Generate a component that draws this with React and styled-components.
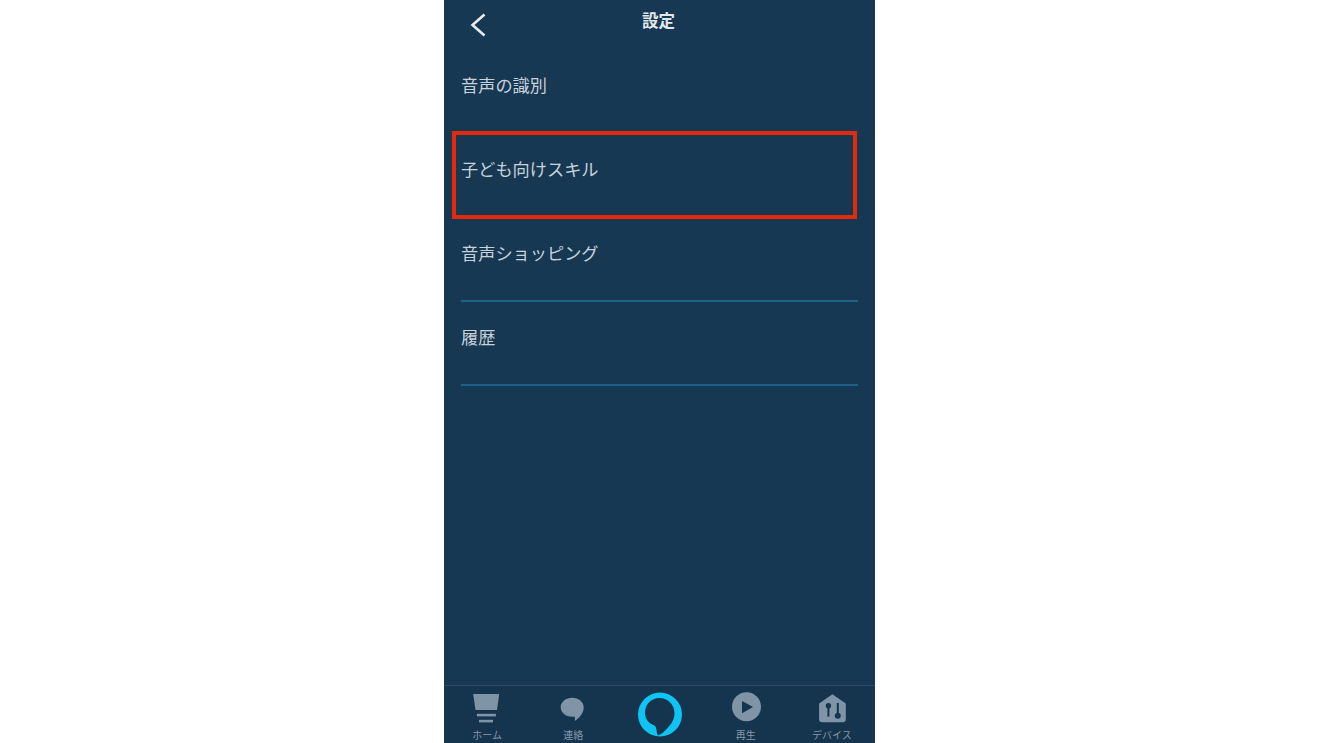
import React from 'react';
import styled, { createGlobalStyle } from 'styled-components';

const GlobalStyle = createGlobalStyle`
  html, body {
    margin: 0;
    padding: 0;
    background: #fff;
  }
`;

const Page = styled.div`
  height: 743px;
  padding-left: 444px;
  overflow: hidden;
  font-family: "Noto Sans CJK JP", "Noto Sans", sans-serif;
`;

const Phone = styled.div`
  display: flex;
  flex-direction: column;
  width: 431px;
  height: 743px;
  overflow: hidden;
  background-color: #163853;
`;

const Header = styled.header`
  position: relative;
  display: flex;
  justify-content: center;
  flex: none;
  height: 50px;
  padding: 8px 2px 0 0;
  box-sizing: border-box;
`;

const BackButton = styled.button`
  position: absolute;
  left: 24px;
  top: 12px;
  width: 20px;
  height: 26px;
  padding: 0;
  border: 0;
  background: none;
`;

const Title = styled.h1`
  margin: 0;
  font-size: 16.5px;
  font-weight: 700;
  line-height: 24px;
  color: #e3e8ec;
`;

const List = styled.div`
  flex: 1;
`;

const Row = styled.div`
  position: relative;
  height: 84px;
  margin: 0 17px;
  padding-top: 22px;
  box-sizing: border-box;
  font-size: 17.2px;
  line-height: 26px;
  color: #c8d2da;
  border-bottom: ${props => (props.$divider ? '2px solid #1d6288' : '2px solid transparent')};
`;

const Highlight = styled.div`
  position: absolute;
  left: -9px;
  top: -3px;
  width: 405px;
  height: 88px;
  box-sizing: border-box;
  border: 4px solid #e5290b;
`;

const Nav = styled.nav`
  display: grid;
  grid-template-columns: repeat(5, 1fr);
  flex: none;
  height: 58px;
  box-sizing: border-box;
  padding-top: 6px;
  border-top: 1px solid #2b4d69;
  background-color: #15344d;
`;

const NavItem = styled.div`
  display: flex;
  flex-direction: column;
  align-items: center;
  font-size: 10px;
  line-height: 14px;
  color: #8598aa;

  svg {
    display: block;
    flex: none;
    margin-bottom: 4px;
  }
`;

const AlexaItem = styled(NavItem)`
  padding-left: 1px;
`;

const HomeIcon = () => (
  <svg width="32" height="32" viewBox="0 0 32 32" fill="#8094a8">
    <path d="M2.200 2h26l-2.200 16H4.500z" />
    <rect x="5.900" y="21.800" width="19" height="2.600" />
    <rect x="8" y="27.800" width="14" height="2.600" />
  </svg>
);

const ChatIcon = () => (
  <svg width="32" height="32" viewBox="0 0 32 32" fill="#8094a8">
    <path d="M15.200 5.700c6.400 0 11.500 4.200 11.500 9.500 0 5.800-3.800 10.600-9 13.800.5-1.500.3-3.100-.3-4.500-.7.100-1.400.2-2.200.2-6.400 0-11.500-4.200-11.500-9.500s5.100-9.500 11.500-9.500z" />
  </svg>
);

const PlayIcon = () => (
  <svg width="32" height="32" viewBox="0 0 32 32">
    <circle cx="16.500" cy="14.700" r="14.500" fill="#8094a8" />
    <path d="M12 9l11 6.100L12 21.300z" fill="#15344d" />
  </svg>
);

const DeviceIcon = () => (
  <svg width="32" height="32" viewBox="0 0 32 32">
    <path
      d="M16.400 2.300L29.800 11.500V27.300a3 3 0 0 1-3 3H6.100a3 3 0 0 1-3-3V11.500z"
      fill="#8094a8"
    />
    <circle cx="12.400" cy="13.700" r="2.700" fill="#15344d" />
    <rect x="11.400" y="14" width="2" height="10.700" fill="#15344d" />
    <rect x="20.800" y="11" width="2" height="11" fill="#15344d" />
    <circle cx="21.800" cy="23.700" r="3" fill="#15344d" />
  </svg>
);

const AlexaIcon = () => (
  <svg width="44" height="45" viewBox="0 0 44 45">
    <path
      fillRule="evenodd"
      d="M22 .5a22 22 0 1 1 0 44 22 22 0 0 1 0-44zM20 43.500C24 42 27 39 30 35.500C33.500 32 36.500 27 36.500 21.500C36.500 12.500 30 6 21.500 6C13 6 7 12.500 7 21C7 27 11 31.500 16 33.300Q18 34 18.300 37Q18.600 41 20 43.500z"
      fill="#0fc4f2"
    />
  </svg>
);

const App = () => (
  <Page>
    <GlobalStyle />
    <Phone>
      <Header>
        <BackButton aria-label="戻る">
          <svg width="20" height="26" viewBox="0 0 20 26" fill="none">
            <path d="M16.500 2.500L4.500 13l12 10.500" stroke="#e8ecef" strokeWidth="2.600" />
          </svg>
        </BackButton>
        <Title>設定</Title>
      </Header>
      <List>
        <Row>音声の識別</Row>
        <Row>
          子ども向けスキル
          <Highlight />
        </Row>
        <Row $divider>音声ショッピング</Row>
        <Row $divider>履歴</Row>
      </List>
      <Nav>
        <NavItem>
          <HomeIcon />
          ホーム
        </NavItem>
        <NavItem>
          <ChatIcon />
          連絡
        </NavItem>
        <AlexaItem>
          <AlexaIcon />
        </AlexaItem>
        <NavItem>
          <PlayIcon />
          再生
        </NavItem>
        <NavItem>
          <DeviceIcon />
          デバイス
        </NavItem>
      </Nav>
    </Phone>
  </Page>
);

export default App;
